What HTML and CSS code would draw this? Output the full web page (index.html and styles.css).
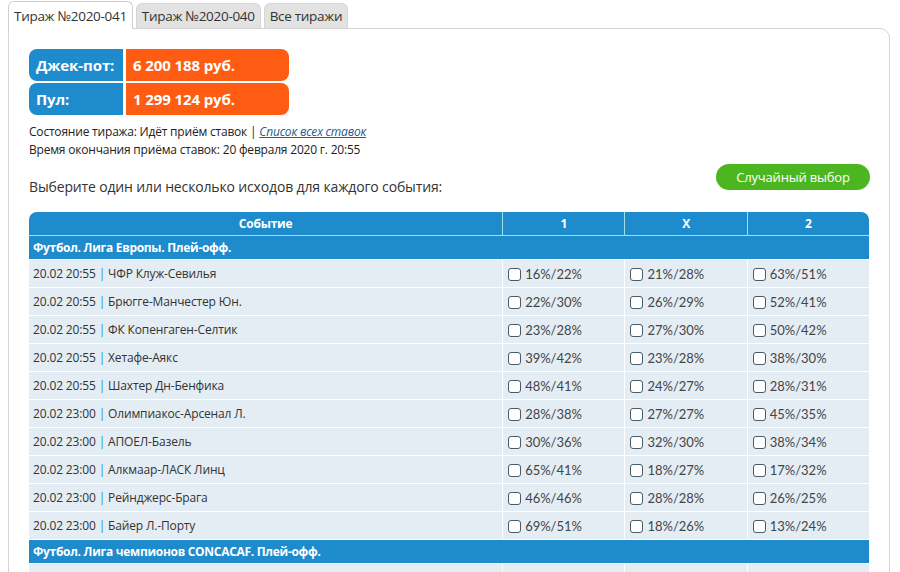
FILE: index.html
```html
<!DOCTYPE html>
<html lang="ru">
<head>
<meta charset="utf-8">
<link rel="stylesheet" href="styles.css">
</head>
<body>
<div class="tabs">
  <div class="tab active">Тираж №2020-041</div>
  <div class="tab">Тираж №2020-040</div>
  <div class="tab">Все тиражи</div>
</div>
<div class="panel">
  <div class="prizes">
    <div class="prize-row"><div class="lbl">Джек-пот:</div><div class="val">6 200 188 руб.</div></div>
    <div class="prize-row"><div class="lbl">Пул:</div><div class="val">1 299 124 руб.</div></div>
  </div>
  <div class="info">
    <div>Состояние тиража: Идёт приём ставок | <a class="link">Список всех ставок</a></div>
    <div>Время окончания приёма ставок: 20 февраля 2020 г. 20:55</div>
  </div>
  <div class="choose">
    <div class="choose-text">Выберите один или несколько исходов для каждого события:</div>
    <button class="random">Случайный выбор</button>
  </div>
  <table class="events">
    <thead>
      <tr><th class="c-ev">Событие</th><th class="c-o">1</th><th class="c-o">X</th><th class="c-o">2</th></tr>
    </thead>
    <tbody>
      <tr class="section"><td colspan="4">Футбол. Лига Европы. Плей-офф.</td></tr>
      <tr><td>20.02 20:55 <span class="sep">|</span> ЧФР Клуж-Севилья</td><td><span class="cb"></span>16%/22%</td><td><span class="cb"></span>21%/28%</td><td><span class="cb"></span>63%/51%</td></tr>
      <tr><td>20.02 20:55 <span class="sep">|</span> Брюгге-Манчестер Юн.</td><td><span class="cb"></span>22%/30%</td><td><span class="cb"></span>26%/29%</td><td><span class="cb"></span>52%/41%</td></tr>
      <tr><td>20.02 20:55 <span class="sep">|</span> ФК Копенгаген-Селтик</td><td><span class="cb"></span>23%/28%</td><td><span class="cb"></span>27%/30%</td><td><span class="cb"></span>50%/42%</td></tr>
      <tr><td>20.02 20:55 <span class="sep">|</span> Хетафе-Аякс</td><td><span class="cb"></span>39%/42%</td><td><span class="cb"></span>23%/28%</td><td><span class="cb"></span>38%/30%</td></tr>
      <tr><td>20.02 20:55 <span class="sep">|</span> Шахтер Дн-Бенфика</td><td><span class="cb"></span>48%/41%</td><td><span class="cb"></span>24%/27%</td><td><span class="cb"></span>28%/31%</td></tr>
      <tr><td>20.02 23:00 <span class="sep">|</span> Олимпиакос-Арсенал Л.</td><td><span class="cb"></span>28%/38%</td><td><span class="cb"></span>27%/27%</td><td><span class="cb"></span>45%/35%</td></tr>
      <tr><td>20.02 23:00 <span class="sep">|</span> АПОЕЛ-Базель</td><td><span class="cb"></span>30%/36%</td><td><span class="cb"></span>32%/30%</td><td><span class="cb"></span>38%/34%</td></tr>
      <tr><td>20.02 23:00 <span class="sep">|</span> Алкмаар-ЛАСК Линц</td><td><span class="cb"></span>65%/41%</td><td><span class="cb"></span>18%/27%</td><td><span class="cb"></span>17%/32%</td></tr>
      <tr><td>20.02 23:00 <span class="sep">|</span> Рейнджерс-Брага</td><td><span class="cb"></span>46%/46%</td><td><span class="cb"></span>28%/28%</td><td><span class="cb"></span>26%/25%</td></tr>
      <tr><td>20.02 23:00 <span class="sep">|</span> Байер Л.-Порту</td><td><span class="cb"></span>69%/51%</td><td><span class="cb"></span>18%/26%</td><td><span class="cb"></span>13%/24%</td></tr>
      <tr class="section"><td colspan="4">Футбол. Лига чемпионов CONCACAF. Плей-офф.</td></tr>
      <tr><td>20.02 04:00 <span class="sep">|</span> Монтеррей-Вальдеррама</td><td><span class="cb"></span>70%/52%</td><td><span class="cb"></span>18%/25%</td><td><span class="cb"></span>12%/23%</td></tr>
    </tbody>
  </table>
</div>
</body>
</html>
```

FILE: styles.css
```css
html, body {
  margin: 0;
  padding: 0;
  background: #fff;
}
body {
  padding: 1px 10px 0 8px;
  font-family: "Open Sans", "Noto Sans", sans-serif;
  color: #222;
  overflow: hidden;
}
.tabs {
  display: flex;
  gap: 3px;
  align-items: flex-end;
  height: 27px;
  position: relative;
  z-index: 1;
}
.tab {
  height: 25px;
  padding: 0 5px;
  display: flex;
  align-items: center;
  font-size: 13.5px;
  color: #333;
  background: #e2e2e2;
  border: 1px solid #d6d6d6;
  border-bottom: none;
  border-radius: 6px 6px 0 0;
  box-sizing: border-box;
  letter-spacing: -0.3px;
}
.tab.active {
  height: 28px;
  margin-bottom: -1px;
  background: #fff;
  border-color: #cfcfcf;
}
.panel {
  border: 1px solid #d4d4d4;
  border-radius: 0 10px 0 0;
  padding: 20px 19px 0 20px;
  height: 600px;
}
.prizes {
  display: flex;
  flex-direction: column;
  gap: 2px;
  width: 260px;
}
.prize-row {
  display: flex;
  gap: 3px;
  height: 32px;
}
.lbl, .val {
  display: flex;
  align-items: center;
  padding-left: 7px;
  color: #fff;
  font-weight: bold;
  font-size: 15px;
  letter-spacing: -0.1px;
}
.lbl {
  width: 94px;
  box-sizing: border-box;
  background: #1e8bcc;
  border-radius: 8px 0 0 8px;
}
.val {
  flex: 1;
  background: #fe5c13;
  border-radius: 0 8px 8px 0;
}
.info {
  margin-top: 8px;
  font-size: 12px;
  line-height: 18px;
  color: #222;
  letter-spacing: -0.2px;
}
.link {
  color: #2a5a8a;
  font-style: italic;
  text-decoration: underline;
}
.choose {
  display: flex;
  justify-content: space-between;
  align-items: flex-end;
  margin-top: 5px;
}
.choose-text {
  font-size: 14px;
  color: #333;
  letter-spacing: -0.15px;
  line-height: 20px;
  margin-bottom: -7px;
}
.random {
  width: 154px;
  height: 26px;
  border: none;
  border-radius: 13px;
  background: #4cb620;
  color: #fff;
  font-family: inherit;
  font-size: 13px;
  padding: 0;
  letter-spacing: -0.2px;
}
.events {
  margin-top: 22px;
  width: 840px;
  border-collapse: separate;
  border-spacing: 0;
  font-size: 12px;
}
.events th {
  background: #1e8bcc;
  color: #fff;
  font-weight: bold;
  height: 23px;
  padding: 0;
  border-right: 1px solid #9fe0ee;
  border-bottom: 1px solid #9fe0ee;
  letter-spacing: -0.2px;
}
.events th:last-child { border-right: none; border-top-right-radius: 8px; }
.events th:first-child { border-top-left-radius: 8px; }
.c-ev { width: 472px; }
.c-o { width: 121px; }
.events td {
  height: 27px;
  padding: 0 0 0 4px;
  background: #e4edf4;
  border-right: 1px solid #fff;
  border-bottom: 1px solid #fff;
  color: #333;
  white-space: nowrap;
  letter-spacing: -0.15px;
}
.events td:last-child { border-right: none; }
.events td + td {
  font-family: "Lato", sans-serif;
  font-size: 13px;
  color: #444;
  letter-spacing: 0;
}
.events tr.section td {
  background: #1e8bcc;
  color: #fff;
  font-weight: bold;
  height: 23px;
  border-bottom: 1px solid #fff;
  letter-spacing: -0.3px;
}
.sep { color: #1e8bcc; }
.cb {
  display: inline-block;
  width: 11px;
  height: 11px;
  border: 1px solid #4a5a66;
  border-radius: 3px;
  background: #fff;
  vertical-align: -2px;
  margin: 0 4px 0 1px;
}
```
